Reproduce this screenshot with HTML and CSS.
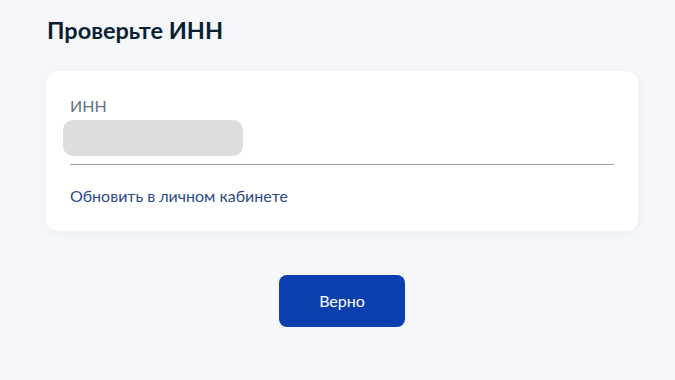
FILE: index.html
```html
<!DOCTYPE html>
<html>
<head>
    <link rel="stylesheet" href="styles.css">
</head>
<body>
<div class="page">
    <h2 class="title">Проверьте ИНН</h2>
    <div class="card">
        <div class="label">ИНН</div>
        <div class="field">
            <div class="blur"></div>
        </div>
        <a class="link" href="#">Обновить в личном кабинете</a>
    </div>
    <div class="actions">
        <button class="btn">Верно</button>
    </div>
</div>
</body>
</html>
```

FILE: styles.css
```css
html, body {
    margin: 0;
    padding: 0;
    background-color: #f5f7fb;
    font-family: Lato, "Noto Sans", sans-serif;
}
.page {
    width: 592px;
    padding: 14px 0 0 46px;
}
.title {
    margin: 0 0 0 1px;
    font-size: 23.5px;
    font-weight: 700;
    color: #0b1f33;
    line-height: 32px;
}
.card {
    margin-top: 25px;
    background-color: #fff;
    border-radius: 12px;
    box-shadow: 0 2px 12px rgba(100, 120, 160, 0.08);
    padding: 26px 24px 24px 24px;
    height: 110px;
}
.label {
    font-size: 16px;
    color: #66727f;
    line-height: 18px;
}
.field {
    margin-top: 5px;
    border-bottom: 1px solid #9ba6b2;
    padding-bottom: 8px;
}
.blur {
    margin-left: -7px;
    width: 180px;
    height: 36px;
    border-radius: 10px;
    background-color: #dddddd;
}
.link {
    display: block;
    margin-top: 22px;
    font-size: 16px;
    color: #2c4a87;
    text-decoration: none;
    line-height: 18px;
}
.actions {
    display: flex;
    justify-content: center;
    margin-top: 44px;
}
.btn {
    width: 126px;
    height: 52px;
    border: none;
    border-radius: 8px;
    background-color: #0b3fb0;
    color: #fff;
    font-family: Lato, "Noto Sans", sans-serif;
    font-size: 16px;
    padding-bottom: 3px;
}
```
